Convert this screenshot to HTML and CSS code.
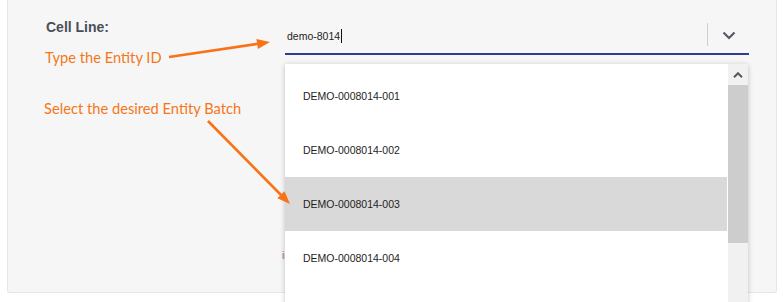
FILE: index.html
```html
<!DOCTYPE html>
<html>
<head>
<meta charset="utf-8">
<link rel="stylesheet" href="styles.css">
</head>
<body>
<div class="panel">
  <div class="field">
    <div class="label">Cell Line:</div>
    <div class="combo">
      <div class="value">demo-8014<span class="caret"></span></div>
      <div class="sep"></div>
      <div class="toggle">
        <svg width="14" height="9" viewBox="0 0 14 9"><path d="M1.5 1.5 L7 7 L12.5 1.5" fill="none" stroke="#555a60" stroke-width="2.2"/></svg>
      </div>
    </div>
  </div>
  <div class="msg">info</div>

  <div class="note note-id">Type the Entity ID</div>
  <div class="note note-batch">Select the desired Entity Batch</div>

  <div class="menu">
    <ul class="list">
      <li class="item">DEMO-0008014-001</li>
      <li class="item">DEMO-0008014-002</li>
      <li class="item active">DEMO-0008014-003</li>
      <li class="item">DEMO-0008014-004</li>
    </ul>
    <div class="scrollbar">
      <div class="sb-btn">
        <svg width="10" height="6" viewBox="0 0 10 6"><path d="M1 5.2 L5 1.2 L9 5.2" fill="none" stroke="#555a60" stroke-width="2"/></svg>
      </div>
      <div class="sb-thumb"></div>
    </div>
  </div>
</div>

<svg class="arrows" width="783" height="302" viewBox="0 0 783 302">
  <line x1="169" y1="57" x2="258" y2="43.8" stroke="#f97316" stroke-width="2.6"/>
  <polygon points="270,42 257.9,48.9 256.4,39" fill="#f97316"/>
  <line x1="208" y1="121" x2="281" y2="195" stroke="#f97316" stroke-width="2.6"/>
  <polygon points="290,204 277.3,198.3 284.5,191.3" fill="#f97316"/>
</svg>
</body>
</html>
```

FILE: styles.css
```css
html, body {
  margin: 0;
  padding: 0;
  overflow: hidden;
  background: #ffffff;
}

body {
  width: 783px;
  height: 302px;
  position: relative;
  font-family: "Liberation Sans", Arial, sans-serif;
}

.panel {
  position: relative;
  margin-left: 7px;
  width: 768px;
  height: 292px;
  background: #f6f6f6;
  border: 1px solid #e6e6e6;
  border-top: none;
  border-radius: 0 0 3px 3px;
}

.field {
  display: flex;
  padding: 19px 0 0 38px;
}

.label {
  width: 239px;
  font-size: 14px;
  font-weight: bold;
  line-height: 16px;
  color: #4a4f57;
}

.combo {
  width: 464px;
  height: 33px;
  margin-top: 1px;
  border-bottom: 2px solid #2e3c98;
  display: flex;
  align-items: flex-start;
}

.value {
  flex: 1;
  padding: 9px 0 0 2px;
  font-size: 10.5px;
  line-height: 14px;
  color: #1e1e1e;
  display: flex;
  align-items: center;
}

.caret {
  display: inline-block;
  width: 1px;
  height: 14px;
  margin-left: 1px;
  background: #111;
}

.sep {
  width: 1px;
  height: 23px;
  margin-top: 3px;
  background: #cfcfcf;
}

.toggle {
  width: 41px;
  height: 28px;
  display: flex;
  align-items: center;
  justify-content: center;
  padding-top: 1px;
}

.msg {
  margin: 195px 0 0 274px;
  font-size: 10px;
  color: #9a5a7a;
}

.note {
  position: absolute;
  font-family: Lato, "Open Sans", sans-serif;
  font-size: 14.7px;
  color: #f5761a;
  white-space: nowrap;
}

.note-id {
  left: 37px;
  top: 48px;
}

.note-batch {
  left: 36px;
  top: 99px;
}

.menu {
  position: absolute;
  left: 277px;
  top: 64px;
  width: 463px;
  height: 250px;
  background: #ffffff;
  box-shadow: 0 1px 5px rgba(0, 0, 0, 0.22);
  display: flex;
}

.list {
  list-style: none;
  margin: 0;
  padding: 5px 0 0 0;
  width: 442px;
}

.item {
  height: 54px;
  display: flex;
  align-items: center;
  padding-left: 18px;
  font-size: 10.5px;
  color: #1e1e1e;
}

.item.active {
  background: #d9d9d9;
}

.scrollbar {
  width: 20px;
  margin-left: 1px;
  background: #f1f1f1;
  display: flex;
  flex-direction: column;
}

.sb-btn {
  height: 21px;
  display: flex;
  align-items: center;
  justify-content: center;
}

.sb-thumb {
  height: 158px;
  background: #cdcdcd;
}

.arrows {
  position: absolute;
  left: 0;
  top: 0;
  pointer-events: none;
}
```
